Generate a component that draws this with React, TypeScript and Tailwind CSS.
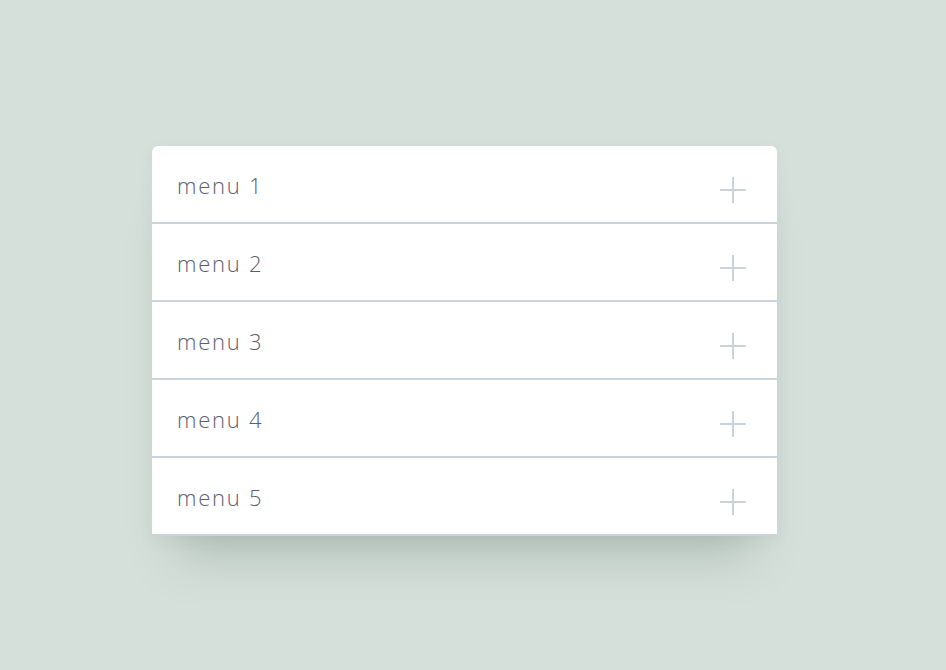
const items = ['menu 1', 'menu 2', 'menu 3', 'menu 4', 'menu 5']

function Plus() {
  return (
    <svg width="26" height="26" viewBox="0 0 26 26" className="shrink-0">
      <path d="M13 0v26M0 13h26" stroke="#c8d3dc" strokeWidth="2" />
    </svg>
  )
}

export default function App() {
  return (
    <div className="min-h-[670px] w-full bg-[#d6e0db] pt-[146px] pl-[152px]">
      <ul className="w-[625px] rounded-t-md bg-white shadow-[0_45px_45px_-25px_rgba(70,95,85,0.26),0_4px_16px_rgba(70,95,85,0.07)] font-['Open_Sans',sans-serif]">
        {items.map((label) => (
          <li
            key={label}
            className="flex h-[78px] items-center justify-between border-b-2 border-[#c9d4dc] pl-[25px] pr-[31px]"
          >
            <span className="pt-[3px] text-[22px] font-[350] tracking-[0.08em] text-[#5b5e6e]">{label}</span>
            <span className="mt-[11px]">
              <Plus />
            </span>
          </li>
        ))}
      </ul>
    </div>
  )
}
